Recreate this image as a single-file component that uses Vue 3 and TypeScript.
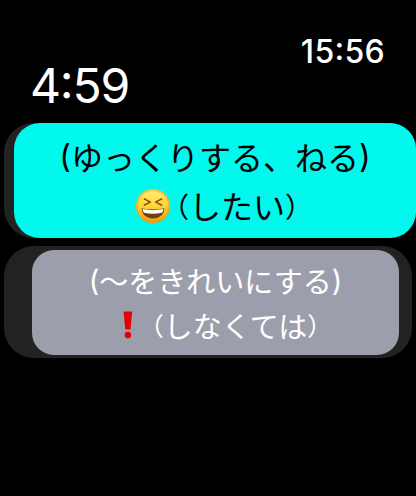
<script setup lang="ts">
interface Task {
  id: string
  title: string
  mood: string
  icon: 'laugh' | 'alert'
}

const remaining = '4:59'
const clock = '15:56'
const tasks: Task[] = [
  { id: 'rest', title: 'ゆっくりする、ねる', mood: 'したい', icon: 'laugh' },
  { id: 'clean', title: '〜をきれいにする', mood: 'しなくては', icon: 'alert' },
]
</script>

<template>
  <main class="watch">
    <header class="header">
      <span class="remaining">{{ remaining }}</span>
      <time class="clock">{{ clock }}</time>
    </header>
    <div v-for="task in tasks" :key="task.id" class="row" :class="task.id">
      <button class="card">
        <span class="title"><span class="paren">(</span>{{ task.title }}<span class="paren">)</span></span>
        <span class="detail">
          <svg v-if="task.icon === 'laugh'" class="laugh" viewBox="0 0 34 34">
            <defs>
              <linearGradient id="face" x1="0" y1="0" x2="0" y2="1">
                <stop offset="0" stop-color="#fff07a" />
                <stop offset="0.5" stop-color="#ffd636" />
                <stop offset="1" stop-color="#f59d10" />
              </linearGradient>
              <radialGradient id="rim">
                <stop offset="0.8" stop-color="#f3a21a" stop-opacity="0" />
                <stop offset="1" stop-color="#e68a12" stop-opacity="0.65" />
              </radialGradient>
            </defs>
            <circle cx="17" cy="17" r="17" fill="url(#face)" />
            <circle cx="17" cy="17" r="17" fill="url(#rim)" />
            <path d="M8.3 9.8L14.3 13.1L8.3 16.2M25.7 9.8L19.7 13.1L25.7 16.2" fill="none" stroke="#7a480c" stroke-width="1.5" stroke-linecap="round" stroke-linejoin="round" />
            <path d="M5.6 19.2Q17 21.8 28.4 19.2C28.2 25.4 23.6 29.4 17 29.4S5.8 25.4 5.6 19.2Z" fill="#71400f" />
            <path d="M6.6 20.1Q17 22.4 27.4 20.1C27.2 22 26.8 23 26 23.8Q17 25.9 8 23.8C7.2 23 6.8 22 6.6 20.1Z" fill="#fff" />
          </svg>
          <svg v-else class="alert" viewBox="0 0 10 28">
            <path d="M.6 .5H9.2L7.5 18.6H2.3Z" fill="#e60000" />
            <circle cx="4.9" cy="24.1" r="3.3" fill="#e60000" />
          </svg>
          <span class="mood"><span class="bracket">（</span>{{ task.mood }}<span class="bracket">）</span></span>
        </span>
      </button>
    </div>
  </main>
</template>

<style>
body {
  background: #000;
}
</style>

<style scoped>
.watch {
  width: 416px;
  height: 496px;
  overflow: hidden;
  background: #000;
  color: #fff;
  box-sizing: border-box;
  font-family: Inter, "Noto Sans CJK JP", sans-serif;
}
.header {
  display: flex;
  justify-content: space-between;
  height: 123px;
  padding: 0 31px 0 30px;
  box-sizing: border-box;
  font-feature-settings: "case" 1;
}
.remaining {
  padding-top: 56px;
  font-size: 48px;
  line-height: 60px;
  letter-spacing: -1.2px;
}
.clock {
  padding-top: 32px;
  font-size: 32px;
  line-height: 40px;
  font-weight: 540;
  letter-spacing: 0.3px;
}
.row {
  box-sizing: border-box;
  background: #222;
  border-radius: 30px;
}
.rest {
  width: 412px;
  height: 115px;
  margin-left: 4px;
  padding-left: 10px;
}
.clean {
  width: 408px;
  height: 112px;
  margin: 8px 0 0 4px;
  padding: 4px 13px 3px 28px;
}
.card {
  display: flex;
  flex-direction: column;
  align-items: center;
  width: 100%;
  height: 100%;
  padding: 0;
  border: 0;
  font-family: "Noto Sans CJK JP", sans-serif;
  white-space: nowrap;
}
.rest .card {
  padding-top: 9px;
  border-radius: 26px;
  background: #00f8ed;
  color: #000;
  font-size: 32px;
  line-height: 49px;
}
.clean .card {
  padding-top: 8px;
  border-radius: 22px;
  background: #9c9fab;
  color: #fff;
  font-size: 29px;
  line-height: 45px;
}
.title {
  display: flex;
}
.paren {
  font-family: Inter, sans-serif;
}
.detail {
  display: flex;
  align-items: center;
}
.rest .detail {
  padding-left: 5px;
}
.clean .detail {
  padding-left: 12px;
}
.mood {
  display: flex;
  font-feature-settings: "halt" 1;
}
.bracket {
  font-size: 0.87em;
}
.laugh {
  width: 34px;
  height: 34px;
  margin-right: 5px;
}
.alert {
  width: 10px;
  height: 28px;
  margin: -2px 18px 0 0;
}
</style>
